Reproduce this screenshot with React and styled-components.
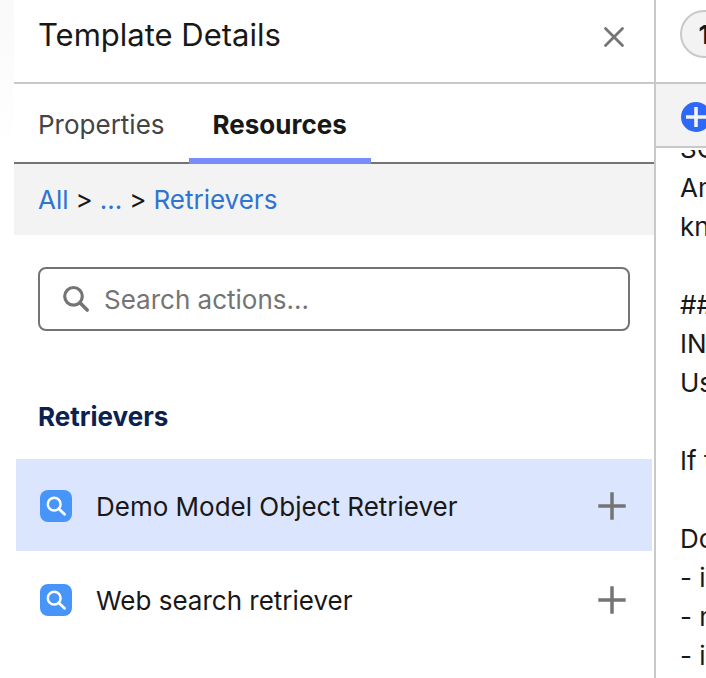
import React, { useState } from "react";
import styled, { createGlobalStyle } from "styled-components";

const GlobalStyle = createGlobalStyle`
  * {
    box-sizing: border-box;
  }

  body {
    margin: 0;
    background-color: #fff;
    color: #181818;
    font-family: Inter, "Liberation Sans", sans-serif;
    font-size: 26px;
  }

  button,
  input {
    font: inherit;
    color: inherit;
  }
`;

const Page = styled.div`
  display: flex;
  height: 100vh;
  overflow: hidden;
`;

const Gutter = styled.div`
  flex: 0 0 14px;
  background: linear-gradient(#f9f9f9, #fff 150px);
`;

const Panel = styled.aside`
  flex: 1;
  min-width: 0;
  border-right: 2px solid #c9c9c9;
`;

const PanelHeader = styled.header`
  display: flex;
  align-items: flex-end;
  justify-content: space-between;
  height: 84px;
  padding: 0 24px 29px;
  border-bottom: 2px solid #c9c9c9;
`;

const PanelTitle = styled.h1`
  margin: 0;
  font-size: 31px;
  font-weight: 400;
  line-height: 36px;
`;

const IconButton = styled.button`
  display: flex;
  align-items: center;
  justify-content: center;
  width: 32px;
  height: 32px;
  padding: 0;
  border: none;
  background: none;
  color: #747474;
  cursor: pointer;
`;

const TabList = styled.div`
  display: flex;
  height: 80px;
  box-shadow: inset 0 -2px #747474;
`;

const Tab = styled.button`
  padding: 6px 24px 0;
  border: none;
  border-bottom: 6px solid ${({ $active }) => ($active ? "#7a8bfa" : "transparent")};
  background: none;
  color: ${({ $active }) => ($active ? "#181818" : "#444")};
  font-weight: ${({ $active }) => ($active ? 700 : 400)};
  cursor: pointer;
`;

const Breadcrumbs = styled.nav`
  display: flex;
  align-items: center;
  gap: 7px;
  height: 71px;
  padding: 0 24px;
  background-color: #f3f3f3;
`;

const Crumb = styled.a`
  color: #2e74d3;
  text-decoration: none;
`;

const SearchBox = styled.label`
  display: flex;
  align-items: center;
  gap: 14px;
  height: 64px;
  margin: 32px 24px 0;
  padding: 0 22px;
  border: 2px solid #747474;
  border-radius: 8px;
  color: #747474;
`;

const SearchInput = styled.input`
  flex: 1;
  min-width: 0;
  padding: 0;
  border: none;
  outline: none;
  background: none;

  &::placeholder {
    color: #747474;
    opacity: 1;
  }
`;

const SectionTitle = styled.h2`
  margin: 66px 24px 22px;
  color: #0b2250;
  font-size: 26px;
  font-weight: 700;
  line-height: 40px;
`;

const List = styled.ul`
  display: flex;
  flex-direction: column;
  gap: 2px;
  margin: 0;
  padding: 0 2px;
  list-style: none;
`;

const ListItem = styled.li`
  display: flex;
  align-items: center;
  gap: 24px;
  height: 92px;
  padding: 2px 24px 0;
  background-color: ${({ $selected }) => ($selected ? "#dbe5fd" : "transparent")};
`;

const ItemIcon = styled.span`
  display: flex;
  width: 32px;
  height: 32px;
  border-radius: 8px;
  background-color: #4795f9;
  color: #fff;
`;

const ItemName = styled.span`
  flex: 1;
`;

const Editor = styled.main`
  flex: 0 0 50px;
  min-width: 0;
  overflow: hidden;
  white-space: nowrap;
`;

const EditorHeader = styled.div`
  height: 84px;
  padding: 10px 24px 0;
  border-bottom: 2px solid #c9c9c9;
`;

const StepPill = styled.button`
  width: 48px;
  height: 48px;
  padding: 0;
  border: 2px solid #c9c9c9;
  border-radius: 24px;
  background-color: #f3f3f3;
  font-weight: 700;
`;

const Toolbar = styled.div`
  display: flex;
  align-items: center;
  height: 64px;
  padding: 4px 24px 0;
  border-bottom: 2px solid #c9c9c9;
  background-color: #f3f3f3;
`;

const PromptText = styled.div`
  padding: 2px 0 0 24px;
  line-height: 39px;
`;

// the top line is half scrolled out of view
const PromptLine = styled.div`
  display: flex;
  align-items: flex-end;
  height: ${({ $cut }) => ($cut ? 18 : 39)}px;
  overflow: hidden;
`;

const retrievers = ["Demo Model Object Retriever", "Web search retriever"];

const promptLines = [
  "SC",
  "An",
  "kn",
  "",
  "###",
  "IN",
  "Us",
  "",
  "If t",
  "",
  "Do",
  "- i",
  "- n",
  "- i",
];

function CloseIcon() {
  return (
    <svg width="32" height="32" viewBox="0 0 32 32" aria-hidden="true">
      <path
        d="M7.5 7.5 L24.5 24.5 M24.5 7.5 L7.5 24.5"
        stroke="currentColor"
        strokeWidth="2.8"
        strokeLinecap="round"
      />
    </svg>
  );
}

function PlusIcon() {
  return (
    <svg width="32" height="32" viewBox="0 0 32 32" aria-hidden="true">
      <path
        d="M16 2.3 V29.7 M2.3 16 H29.7"
        stroke="currentColor"
        strokeWidth="3.5"
      />
    </svg>
  );
}

function SearchIcon() {
  return (
    <svg width="28" height="28" viewBox="0 0 28 28" fill="none" aria-hidden="true">
      <circle cx="11.5" cy="11.3" r="8.8" stroke="currentColor" strokeWidth="3.2" />
      <path
        d="M18 17.8 L25.2 25"
        stroke="currentColor"
        strokeWidth="3.6"
        strokeLinecap="round"
      />
    </svg>
  );
}

function RetrieverIcon() {
  return (
    <svg width="32" height="32" viewBox="0 0 32 32" fill="none" aria-hidden="true">
      <circle cx="14.2" cy="14.2" r="6.4" stroke="currentColor" strokeWidth="2.5" />
      <path
        d="M19 19 L24.5 24.3"
        stroke="currentColor"
        strokeWidth="2.8"
        strokeLinecap="round"
      />
    </svg>
  );
}

function AddIcon() {
  return (
    <svg width="32" height="32" viewBox="0 0 32 32" aria-hidden="true">
      <circle cx="16" cy="16" r="15" fill="#2e68f8" />
      <path d="M16 6 V26 M6 16 H26" stroke="#f3f3f3" strokeWidth="3.6" />
    </svg>
  );
}

function App() {
  const [activeTab, setActiveTab] = useState("Resources");
  const [query, setQuery] = useState("");

  return (
    <Page>
      <GlobalStyle />
      <Gutter />

      <Panel>
        <PanelHeader>
          <PanelTitle>Template Details</PanelTitle>
          <IconButton aria-label="Close">
            <CloseIcon />
          </IconButton>
        </PanelHeader>

        <TabList role="tablist">
          {["Properties", "Resources"].map((tab) => (
            <Tab
              key={tab}
              role="tab"
              aria-selected={tab === activeTab}
              $active={tab === activeTab}
              onClick={() => setActiveTab(tab)}
            >
              {tab}
            </Tab>
          ))}
        </TabList>

        <Breadcrumbs>
          <Crumb href="#all">All</Crumb>
          <span>&gt;</span>
          <Crumb href="#more">...</Crumb>
          <span>&gt;</span>
          <Crumb href="#retrievers">Retrievers</Crumb>
        </Breadcrumbs>

        <SearchBox>
          <SearchIcon />
          <SearchInput
            type="text"
            aria-label="Search actions"
            placeholder="Search actions..."
            value={query}
            onChange={(e) => setQuery(e.target.value)}
          />
        </SearchBox>

        <SectionTitle>Retrievers</SectionTitle>
        <List>
          {retrievers.map((name, index) => (
            <ListItem key={name} $selected={index === 0}>
              <ItemIcon>
                <RetrieverIcon />
              </ItemIcon>
              <ItemName>{name}</ItemName>
              <IconButton aria-label={`Add ${name}`}>
                <PlusIcon />
              </IconButton>
            </ListItem>
          ))}
        </List>
      </Panel>

      <Editor>
        <EditorHeader>
          <StepPill>1</StepPill>
        </EditorHeader>
        <Toolbar>
          <IconButton aria-label="Add resource">
            <AddIcon />
          </IconButton>
        </Toolbar>
        <PromptText>
          {promptLines.map((line, index) => (
            <PromptLine key={index} $cut={index === 0}>
              {line}
            </PromptLine>
          ))}
        </PromptText>
      </Editor>
    </Page>
  );
}

export default App;
